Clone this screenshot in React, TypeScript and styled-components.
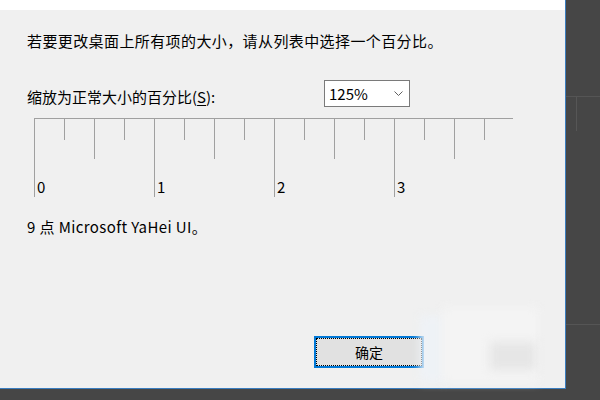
import React from "react";
import styled, { createGlobalStyle } from "styled-components";

const GlobalStyle = createGlobalStyle`
  html, body {
    margin: 0;
    padding: 0;
    width: 600px;
    height: 400px;
    overflow: hidden;
    background: #464646;
  }
  #root {
    width: 600px;
    height: 400px;
  }
`;

const Desktop = styled.div`
  display: flex;
  width: 600px;
  height: 400px;
  background: #464646;
  font-family: "Noto Sans CJK SC", "Noto Sans", "Liberation Sans", sans-serif;
  color: #000;
`;

const Dialog = styled.div`
  position: relative;
  display: flex;
  flex-direction: column;
  width: 565px;
  height: 388px;
  background: #f0f0f0;
  border-right: 1px solid #3a7dbf;
  border-bottom: 1px solid #3a7dbf;
`;

const TitleStrip = styled.div`
  height: 10px;
  background: #ffffff;
`;

const Body = styled.div`
  flex: 1;
  display: flex;
  flex-direction: column;
  padding-left: 27px;
`;

const Text = styled.div<{ $top: number }>`
  margin-top: ${(p) => p.$top}px;
  font-size: 15px;
  line-height: 20px;
  letter-spacing: 0.4px;
  white-space: nowrap;
`;

const ScaleRow = styled.div`
  display: flex;
  align-items: flex-end;
  margin-top: 29px;
`;

const ScaleLabel = styled.label`
  width: 297px;
  font-size: 15px;
  line-height: 20px;
  white-space: nowrap;
  u {
    text-decoration: underline;
    text-underline-offset: 2px;
  }
`;

const Combo = styled.div`
  box-sizing: border-box;
  display: flex;
  align-items: center;
  justify-content: space-between;
  width: 86px;
  height: 27px;
  padding: 0 6px 0 4px;
  background: #ffffff;
  border: 1px solid #7a7a7a;
  font-size: 15px;
  line-height: 20px;
`;

const RulerBox = styled.div`
  margin-top: 11px;
  margin-left: 7px;
  width: 480px;
  height: 80px;
`;

const Footer = styled.div`
  margin-top: auto;
  padding: 0 0 20px 287px;
`;

const OkButton = styled.button`
  position: relative;
  box-sizing: border-box;
  width: 110px;
  height: 32px;
  padding: 0;
  background: #e1e1e1;
  border: 2px solid #0078d7;
  font-family: inherit;
  font-size: 14px;
  color: #000;
  &::after {
    content: "";
    position: absolute;
    inset: 0;
    border: 1px dotted #000;
  }
`;

const BlurPatch = styled.div<{ $l: number; $t: number; $w: number; $h: number; $c: string }>`
  position: absolute;
  left: ${(p) => p.$l}px;
  top: ${(p) => p.$t}px;
  width: ${(p) => p.$w}px;
  height: ${(p) => p.$h}px;
  background: ${(p) => p.$c};
  filter: blur(5px);
  pointer-events: none;
`;

const Backdrop = styled.div`
  flex: 1;
  display: flex;
  flex-direction: column;
  padding-top: 96px;
`;

const BackdropPane = styled.div<{ $h: number }>`
  height: ${(p) => p.$h}px;
  border-top: 1px solid #555555;
`;

const BackdropCell = styled.div`
  margin-left: 10px;
  height: 34px;
  border-left: 1px solid #565656;
`;

const Ruler = () => {
  const ticks = Array.from({ length: 16 }, (_, i) => i);
  return (
    <svg width="480" height="80" viewBox="0 0 480 80">
      <line x1="0" y1="0.5" x2="479" y2="0.5" stroke="#a0a0a0" />
      {ticks.map((k) => {
        const x = k * 30 + 0.5;
        const len = k % 4 === 0 ? 79 : k % 2 === 0 ? 41 : 22;
        return <line key={k} x1={x} y1="0" x2={x} y2={len} stroke="#a0a0a0" />;
      })}
      {[0, 1, 2, 3].map((n) => (
        <text
          key={n}
          x={n * 120 + 3}
          y="75"
          fontSize="15"
          fontFamily="'Noto Sans CJK SC', 'Noto Sans', sans-serif"
          fill="#000"
        >
          {n}
        </text>
      ))}
    </svg>
  );
};

const Chevron = () => (
  <svg width="9" height="6" viewBox="0 0 9 6">
    <polyline points="0.5,0.5 4.5,4.5 8.5,0.5" fill="none" stroke="#606060" />
  </svg>
);

export default function App() {
  return (
    <>
      <GlobalStyle />
      <Desktop>
        <Dialog>
          <TitleStrip />
          <Body>
            <Text $top={21}>若要更改桌面上所有项的大小，请从列表中选择一个百分比。</Text>
            <ScaleRow>
              <ScaleLabel>
                缩放为正常大小的百分比(<u>S</u>):
              </ScaleLabel>
              <Combo>
                <span>125%</span>
                <Chevron />
              </Combo>
            </ScaleRow>
            <RulerBox>
              <Ruler />
            </RulerBox>
            <Text $top={19}>9 点 Microsoft YaHei UI。</Text>
            <Footer>
              <OkButton>确定</OkButton>
            </Footer>
          </Body>
          <BlurPatch $l={420} $t={316} $w={26} $h={66} $c="#eef2f6" />
          <BlurPatch $l={442} $t={308} $w={96} $h={74} $c="#f4f4f4" />
          <BlurPatch $l={490} $t={342} $w={46} $h={28} $c="#e6e6e6" />
        </Dialog>
        <Backdrop>
          <BackdropPane $h={227}>
            <BackdropCell />
          </BackdropPane>
          <BackdropPane $h={60} />
        </Backdrop>
      </Desktop>
    </>
  );
}
